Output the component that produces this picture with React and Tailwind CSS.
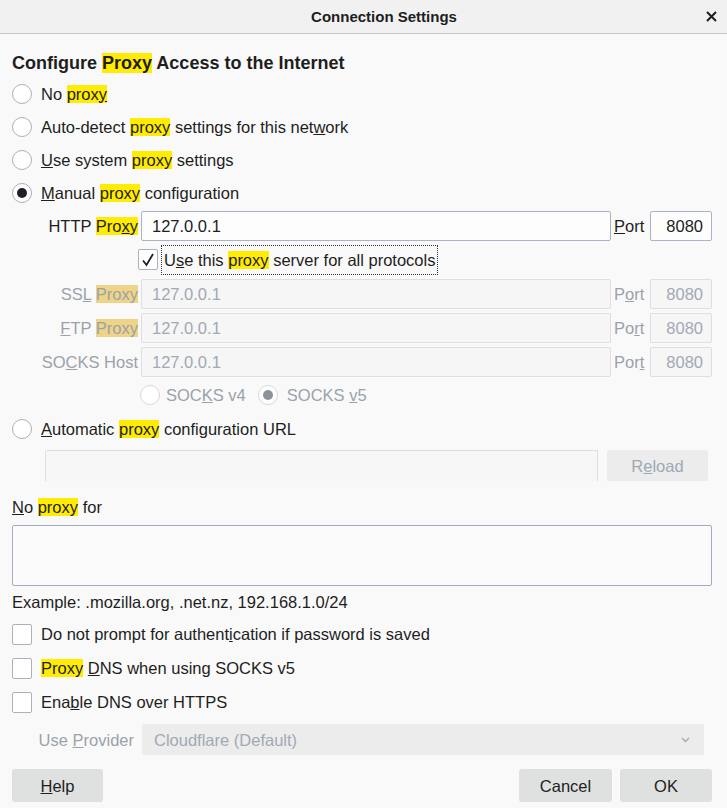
import React from "react";

const Hl = ({ children, dim }) => (
  <span className={dim ? "bg-[#efd487]" : "bg-[#ffec00]"}>{children}</span>
);

function Radio({ checked, disabled }) {
  return (
    <span
      className={`flex h-[20px] w-[20px] shrink-0 items-center justify-center rounded-full border bg-white ${
        disabled ? "border-[#d5d9de]" : "border-[#a9b1ba]"
      }`}
    >
      {checked && (
        <span
          className={`h-[10px] w-[10px] rounded-full ${
            disabled ? "bg-[#8e9399]" : "bg-[#1f1f26]"
          }`}
        />
      )}
    </span>
  );
}

function Check({ checked }) {
  return (
    <span className="flex h-[21px] w-[20px] shrink-0 items-center justify-center rounded-[2px] border border-[#a9b1ba] bg-white">
      {checked && (
        <svg width="16" height="16" viewBox="0 0 16 16">
          <path d="M3 8.5 L6.5 13 L13 2" fill="none" stroke="#1f1f26" strokeWidth="1.8" />
        </svg>
      )}
    </span>
  );
}

function Field({ children, disabled, className = "" }) {
  return (
    <div
      className={`flex items-center rounded-[2px] border ${
        disabled
          ? "border-[#dcdee0] bg-[#f6f6f6] text-[#a1a9b4]"
          : "border-[#a8b4c4] bg-[#fdfdfd] text-[#1e1e1e]"
      } ${className}`}
    >
      {children}
    </div>
  );
}

function ProxyRow({ label, port, disabled, className = "" }) {
  return (
    <div className={`flex h-[30px] ${className}`}>
      <div
        className={`flex w-[129px] items-center justify-end pr-[3px] ${
          disabled ? "text-[#9ba2ab]" : ""
        }`}
      >
        {label}
      </div>
      <Field disabled={disabled} className="flex-1 pl-[10px]">
        127.0.0.1
      </Field>
      <div
        className={`flex w-[39px] items-center pl-[3px] ${
          disabled ? "text-[#9ba2ab]" : ""
        }`}
      >
        {port}
      </div>
      <Field disabled={disabled} className="w-[62px] justify-end pr-[8px]">
        8080
      </Field>
    </div>
  );
}

function RadioRow({ checked, children, className = "" }) {
  return (
    <div className={`flex h-[33px] items-center gap-[9px] ${className}`}>
      <Radio checked={checked} />
      <span>{children}</span>
    </div>
  );
}

function CheckRow({ children }) {
  return (
    <div className="flex h-[34px] items-center gap-[9px]">
      <Check />
      <span>{children}</span>
    </div>
  );
}

function Button({ children, className = "" }) {
  return (
    <button
      className={`flex h-[33px] items-center justify-center rounded-[3px] bg-[#dfe1e1] text-[#1e1e1e] ${className}`}
    >
      {children}
    </button>
  );
}

export default function App() {
  return (
    <div className="h-[808px] w-[727px] overflow-hidden bg-[#f9f9f9] font-['Liberation_Sans',Arial,sans-serif] text-[16.5px] leading-[20px] text-[#1e1e1e]">
      <div className="relative flex h-[34px] items-center justify-center border-b border-[#c4c6c8] bg-[#f1f1f1] pl-[41px]">
        <span className="text-[15px] font-bold">Connection Settings</span>
        <svg
          className="absolute right-[10px] top-[11px]"
          width="11"
          height="11"
          viewBox="0 0 11 11"
        >
          <path d="M1 1 L10 10 M10 1 L1 10" stroke="#1e1e1e" strokeWidth="2" />
        </svg>
      </div>

      <div className="flex flex-col pl-[12px] pr-[15px]">
        <h1 className="mt-[18px] h-[22px] text-[18px] font-bold leading-[22px]">
          Configure <Hl>Proxy</Hl> Access to the Internet
        </h1>

        <RadioRow className="mt-[3px]">
          No <Hl>prox<u>y</u></Hl>
        </RadioRow>
        <RadioRow>
          Auto-detect <Hl>proxy</Hl> settings for this net<u>w</u>ork
        </RadioRow>
        <RadioRow>
          <u>U</u>se system <Hl>proxy</Hl> settings
        </RadioRow>
        <RadioRow checked>
          <u>M</u>anual <Hl>proxy</Hl> configuration
        </RadioRow>

        <ProxyRow
          className="mt-[2px]"
          label={
            <span>
              HTTP <Hl>Pro<u>x</u>y</Hl>
            </span>
          }
          port={
            <span>
              <u>P</u>ort
            </span>
          }
        />

        <div className="mt-[3px] flex h-[31px] items-center pl-[126px]">
          <Check checked />
          <span className="ml-[3px] border border-dotted border-[#333] px-[2px] py-[4px]">
            U<u>s</u>e this <Hl>proxy</Hl> server for all protocols
          </span>
        </div>

        <ProxyRow
          disabled
          className="mt-[4px]"
          label={
            <span>
              SS<u>L</u> <Hl dim>Proxy</Hl>
            </span>
          }
          port={
            <span>
              P<u>o</u>rt
            </span>
          }
        />
        <ProxyRow
          disabled
          className="mt-[4px]"
          label={
            <span>
              <u>F</u>TP <Hl dim>Proxy</Hl>
            </span>
          }
          port={
            <span>
              Po<u>r</u>t
            </span>
          }
        />
        <ProxyRow
          disabled
          className="mt-[4px]"
          label={
            <span>
              SO<u>C</u>KS Host
            </span>
          }
          port={
            <span>
              Por<u>t</u>
            </span>
          }
        />

        <div className="mt-[4px] flex h-[28px] items-center pl-[128px] text-[#9ba2ab]">
          <Radio disabled />
          <span className="ml-[6px]">
            SOC<u>K</u>S v4
          </span>
          <span className="ml-[12px]">
            <Radio disabled checked />
          </span>
          <span className="ml-[9px]">
            SOCKS <u>v</u>5
          </span>
        </div>

        <RadioRow className="mt-[3px]">
          <u>A</u>utomatic <Hl>proxy</Hl> configuration URL
        </RadioRow>

        <div className="mt-[5px] flex h-[31px] pl-[33px] pr-[4px]">
          <div className="flex-1 rounded-t-[2px] border border-b-0 border-[#dcdee0] bg-[#f7f7f7]" />
          <div className="ml-[9px] flex w-[101px] items-center justify-center rounded-[2px] bg-[#ececec] text-[#9ea9b7]">
            R<u>e</u>load
          </div>
        </div>

        <div className="mt-[16px] h-[20px]">
          <u>N</u>o <Hl>proxy</Hl> for
        </div>
        <div className="mt-[8px] h-[61px] rounded-[2px] border border-[#9fadbd] bg-[#fbfbfb]" />

        <div className="mt-[6px] h-[20px]">
          Example: .mozilla.org, .net.nz, 192.168.1.0/24
        </div>

        <div className="mt-[5px] flex flex-col">
          <CheckRow>
            Do not prompt for authent<u>i</u>cation if password is saved
          </CheckRow>
          <CheckRow>
            <Hl>Proxy</Hl> <u>D</u>NS when using SOCKS v5
          </CheckRow>
          <CheckRow>
            Ena<u>b</u>le DNS over HTTPS
          </CheckRow>
        </div>

        <div className="mt-[5px] flex h-[31px]">
          <div className="flex w-[122px] items-center justify-end text-[#9ba2ab]">
            <span>
              Use <u>P</u>rovider
            </span>
          </div>
          <div className="ml-[8px] mr-[8px] flex flex-1 items-center justify-between rounded-[2px] bg-[#ececec] pl-[12px] pr-[14px] text-[#a1a9b4]">
            <span>Cloudflare (Default)</span>
            <svg width="9" height="6" viewBox="0 0 9 6">
              <path d="M1 1 L4.5 4.5 L8 1" fill="none" stroke="#a6aeb8" strokeWidth="1.5" />
            </svg>
          </div>
        </div>

        <div className="mt-[14px] flex items-center">
          <Button className="w-[91px]">
            <span>
              <u>H</u>elp
            </span>
          </Button>
          <div className="ml-auto flex gap-[8px]">
            <Button className="w-[93px]">Cancel</Button>
            <Button className="w-[92px]">OK</Button>
          </div>
        </div>
      </div>
    </div>
  );
}
